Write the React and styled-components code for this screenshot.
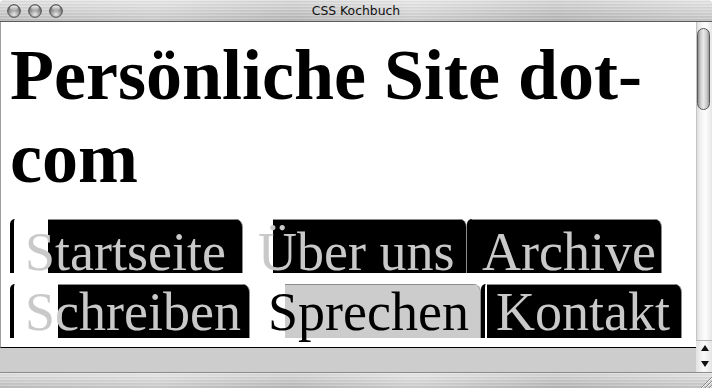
import React from 'react';
import styled, { createGlobalStyle } from 'styled-components';

const Global = createGlobalStyle`
  html, body { margin: 0; padding: 0; background: #fff; }
  #root { width: 712px; height: 388px; }
`;

const metal = `
  background-color: #c9c9c9;
  background-image:
    repeating-linear-gradient(to bottom, rgba(255,255,255,0.22) 0 1px, rgba(0,0,0,0.035) 1px 2px, transparent 2px 3px),
    linear-gradient(to right, rgba(255,255,255,0) 0%, rgba(255,255,255,0.18) 22%, rgba(0,0,0,0.04) 41%, rgba(255,255,255,0.22) 58%, rgba(0,0,0,0.05) 78%, rgba(255,255,255,0.12) 100%),
    linear-gradient(to bottom, #e3e3e3, #bcbcbc);
`;

const Window = styled.div`
  width: 712px;
  height: 388px;
  display: flex;
  flex-direction: column;
  overflow: hidden;
  border-radius: 5px 5px 0 0;
  background: #c8c8c8;
`;

const TitleBar = styled.header`
  ${metal}
  flex: none;
  height: 21px;
  border-bottom: 1px solid #5c5c5c;
  display: grid;
  grid-template-columns: 1fr auto 1fr;
  align-items: center;
  padding: 0 7px;
`;

const Lights = styled.div`
  display: flex;
  gap: 7px;
  align-items: center;
`;

const Title = styled.h2`
  margin: 0;
  font: 12.4px "DejaVu Sans", "Liberation Sans", sans-serif;
  color: #111;
  white-space: nowrap;
`;

const Main = styled.div`
  flex: 1;
  display: flex;
  min-height: 0;
`;

const Column = styled.div`
  flex: 1;
  display: flex;
  flex-direction: column;
  min-width: 0;
`;

const Page = styled.main`
  flex: 1;
  min-height: 0;
  background: #fff;
  border-left: 1px solid #a0a0a0;
  border-bottom: 1px solid #000;
  padding-left: 9px;
  overflow: hidden;
`;

const HTrack = styled.div`
  flex: none;
  height: 24px;
  background: #cdcdcd;
`;

const VScroll = styled.div`
  flex: none;
  width: 16px;
  display: flex;
  flex-direction: column;
  background: linear-gradient(to right, #d9d9d9, #f2f2f2 30%, #fdfdfd 60%, #e6e6e6);
  box-shadow: inset 1px 0 0 #c4c4c4;
`;

const Thumb = styled.div`
  margin: 6px 0 0 1px;
  width: 13px;
  height: 82px;
  box-sizing: border-box;
  border-radius: 7px;
  border: 1px solid #595959;
  background: linear-gradient(to right, #8f8f8f, #cfcfcf 25%, #e9e9e9 50%, #cbcbcb 78%, #9a9a9a);
`;

const Arrows = styled.div`
  margin-top: auto;
  display: flex;
  flex-direction: column;
  border-top: 1px solid #b5b5b5;
  background: linear-gradient(to right, #e2e2e2, #fafafa 50%, #e4e4e4);
`;

const ArrowBtn = styled.div`
  height: ${p => p.$h}px;
  display: flex;
  align-items: center;
  justify-content: center;
  padding-left: 1px;
`;

const BottomBar = styled.footer`
  ${metal}
  flex: none;
  height: 15px;
  border-top: 1px solid #8a8a8a;
  display: flex;
  justify-content: flex-end;
  align-items: flex-end;
`;

const Heading = styled.h1`
  margin: 12px 0 19px;
  font: bold 72px "Liberation Serif", "Times New Roman", serif;
  color: #000;
`;

const Nav = styled.nav`
  display: flex;
  flex-direction: column;
  gap: 11px;
`;

const TabRow = styled.div`
  display: flex;
  line-height: ${p => p.$lh}px;
`;

const Tab = styled.a`
  flex: none;
  box-sizing: border-box;
  width: ${p => p.$w}px;
  height: 54px;
  padding-left: ${p => p.$pad}px;
  border-left: 4px solid ${p => p.$edge};
  border-right: 1px solid #8c8c8c;
  border-radius: 5px 8px 0 0;
  background:
    linear-gradient(#8c8c8c, #8c8c8c) ${p => p.$lead}px 0 / 100% 1px no-repeat,
    linear-gradient(to right, #fff ${p => p.$lead}px, ${p => p.$fill} ${p => p.$lead}px);
  color: ${p => p.$ink};
  font-family: "Liberation Serif", "Times New Roman", serif;
  font-size: 54px;
  white-space: nowrap;
  text-decoration: none;
  cursor: pointer;
`;

const Light = () => (
  <svg width="14" height="14" viewBox="0 0 14 14">
    <defs>
      <radialGradient id="lightFill" cx="50%" cy="78%" r="70%">
        <stop offset="0" stopColor="#e8e8e8" />
        <stop offset="0.55" stopColor="#9c9c9c" />
        <stop offset="1" stopColor="#6a6a6a" />
      </radialGradient>
      <linearGradient id="lightGloss" x1="0" y1="0" x2="0" y2="1">
        <stop offset="0" stopColor="#fff" stopOpacity="0.95" />
        <stop offset="1" stopColor="#fff" stopOpacity="0.1" />
      </linearGradient>
    </defs>
    <circle cx="7" cy="7" r="6.3" fill="url(#lightFill)" stroke="#4a4a4a" strokeWidth="1" />
    <ellipse cx="7" cy="4.1" rx="4" ry="2.5" fill="url(#lightGloss)" />
  </svg>
);

const Tri = ({ up }) => (
  <svg width="8" height="6" viewBox="0 0 8 6">
    <polygon points={up ? '4,0 8,6 0,6' : '0,0 8,0 4,6'} fill="#111" />
  </svg>
);

const Grip = () => (
  <svg width="13" height="13" viewBox="0 0 13 13">
    <g strokeWidth="1">
      <line x1="13" y1="2" x2="2" y2="13" stroke="#888" />
      <line x1="13" y1="3" x2="3" y2="13" stroke="#f4f4f4" />
      <line x1="13" y1="6" x2="6" y2="13" stroke="#888" />
      <line x1="13" y1="7" x2="7" y2="13" stroke="#f4f4f4" />
      <line x1="13" y1="10" x2="10" y2="13" stroke="#888" />
      <line x1="13" y1="11" x2="11" y2="13" stroke="#f4f4f4" />
    </g>
  </svg>
);

const rows = [
  {
    lh: 66,
    tabs: [
      { label: 'Startseite', w: 233, lead: 34, edge: '#000' },
      { label: 'Über uns', w: 224, lead: 26, edge: '#fff' },
      { label: 'Archive', w: 195, lead: 0, edge: '#000' },
    ],
  },
  {
    lh: 56,
    tabs: [
      { label: 'Schreiben', w: 240, lead: 44, edge: '#000' },
      { label: 'Sprechen', w: 231, lead: 31, edge: '#fff', current: true, pad: 14 },
      { label: 'Kontakt', w: 201, lead: 2, edge: '#000' },
    ],
  },
];

export default function App() {
  return (
    <>
      <Global />
      <Window>
        <TitleBar>
          <Lights>
            <Light />
            <Light />
            <Light />
          </Lights>
          <Title>CSS Kochbuch</Title>
          <div />
        </TitleBar>
        <Main>
          <Column>
            <Page>
              <Heading>Persönliche Site dot-com</Heading>
              <Nav>
                {rows.map((row, i) => (
                  <TabRow key={i} $lh={row.lh}>
                    {row.tabs.map(t => (
                      <Tab
                        key={t.label}
                        href="#"
                        $w={t.w}
                        $lead={t.lead}
                        $edge={t.edge}
                        $pad={t.pad ?? 11}
                        $fill={t.current ? '#cccccc' : '#000'}
                        $ink={t.current ? '#000' : '#c9c9c9'}
                      >
                        {t.label}
                      </Tab>
                    ))}
                  </TabRow>
                ))}
              </Nav>
            </Page>
            <HTrack />
          </Column>
          <VScroll>
            <Thumb />
            <Arrows>
              <ArrowBtn $h={14}><Tri up /></ArrowBtn>
              <ArrowBtn $h={17}><Tri /></ArrowBtn>
            </Arrows>
          </VScroll>
        </Main>
        <BottomBar>
          <Grip />
        </BottomBar>
      </Window>
    </>
  );
}
